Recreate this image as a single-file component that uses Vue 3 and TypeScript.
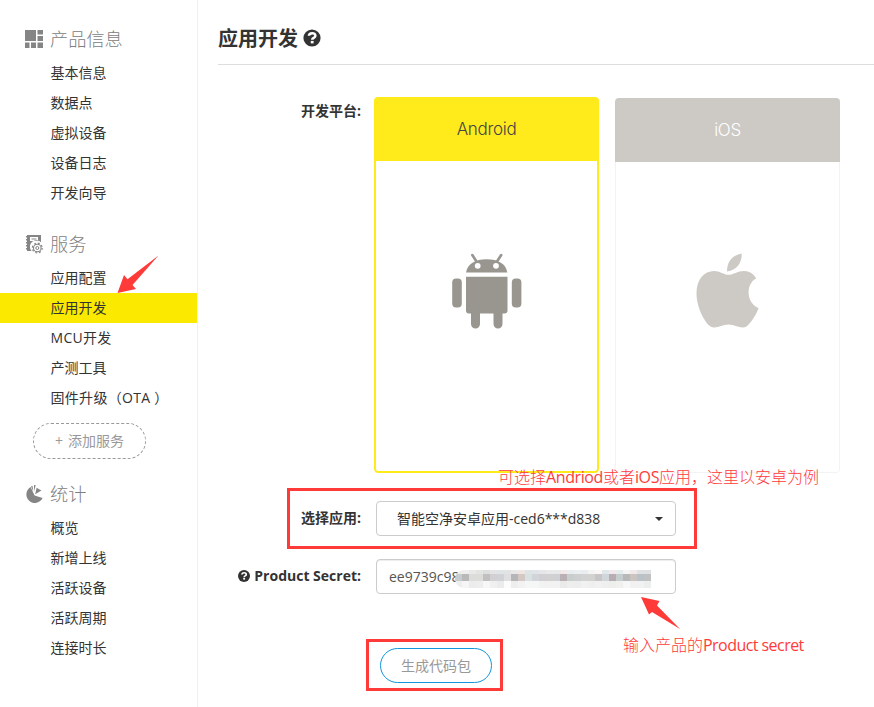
<script setup lang="ts">
import { ref } from 'vue'

interface MenuSection {
  key: string
  title: string
  items: string[]
}

const sections: MenuSection[] = [
  { key: 'product', title: '产品信息', items: ['基本信息', '数据点', '虚拟设备', '设备日志', '开发向导'] },
  { key: 'service', title: '服务', items: ['应用配置', '应用开发', 'MCU开发', '产测工具', '固件升级（OTA ）'] },
  { key: 'stats', title: '统计', items: ['概览', '新增上线', '活跃设备', '活跃周期', '连接时长'] },
]
const active = ref('应用开发')
const hasLatin = (text: string): boolean => /[A-Z]/.test(text)

const mosaic: string[][] = [
  ['#eceeee', '#eeeeee', '#e8e9e8', '#e3e5e2', '#dddfdf', '#e4e4e6', '#dfe4e6', '#e2e3e5', '#e8e8e8', '#efe6e3', '#dce4e4', '#e0e4e8', '#e6e6e8', '#e9e9eb', '#e7e8ea', '#f2e8ea', '#e8eef0', '#eceff0', '#e9edef', '#f4f4f4', '#fbf5f3', '#e0e7ea', '#f3e7ec', '#e5ecec', '#f5f5f5', '#f1e9ea', '#dfe1e2', '#dfe0e1'],
  ['#c7ccd0', '#b9b9ba', '#dcdcdb', '#dcdcdb', '#c2bfc1', '#d3d0d3', '#cfd3d7', '#dfdfe1', '#b6b5b7', '#d3c8c3', '#dae1e2', '#d1d5d9', '#d0cfd1', '#d1d1d2', '#cfd0d3', '#baafb2', '#c8cdce', '#ccd0d0', '#d2d2d2', '#d2d2d1', '#c7c5c8', '#d1d6da', '#b8adb0', '#c5cdce', '#b8b9b9', '#cbc4bf', '#b9c1c9', '#c0c1c2'],
  ['#eeeeef', '#f5f5f5', '#ececec', '#eeeeef', '#f7f7f7', '#f0f0f1', '#e9ebec', '#fcfcfc', '#eeeeef', '#f2f2f2', '#f5f6f6', '#f5f6f6', '#f2f2f2', '#f2f2f2', '#f2f2f2', '#eaeaea', '#eeeeec', '#eceeee', '#f1f1f1', '#efefee', '#f1f1f1', '#efefef', '#eeeeed', '#f0f0ee', '#f6f7f8', '#f1f1f1', '#f0f1f1', '#eceded'],
]
</script>

<template>
  <div class="page">
    <nav class="sidebar">
      <section v-for="s in sections" :key="s.key" class="section">
        <h3 class="section-title">
          <svg v-if="s.key === 'product'" width="18" height="18" viewBox="0 0 18 18" fill="#858585">
            <path d="M0 0h11v11H0zM12.5 0H18v4.5h-5.5zM12.5 6H18v5h-5.5zM0 12.5h4.5V18H0zM6 12.5h5V18H6zM12.5 12.5H18V18h-5.5z" />
          </svg>
          <svg v-else-if="s.key === 'service'" width="18" height="20" viewBox="0 0 18 20" fill="#858585">
            <path fill-rule="evenodd" d="M2 1H16V8.2A5.8 5.8 0 0 0 6.6 17H2zM5 3V7H13V3z" />
            <path d="M1 2h1v1.500H1zM1 5h1v1.500H1zM1 8h1v1.500H1zM1 11h1v1.500H1zM1 14h1v1.500H1zM6.500 4.500h5v1h-5z" />
            <circle cx="12.300" cy="14" r="3.800" fill="none" stroke="#858585" stroke-width="1.100" />
            <circle cx="12.300" cy="14" r="4.900" fill="none" stroke="#858585" stroke-width="1.200" stroke-dasharray="1.924 1.924" />
            <circle cx="12.300" cy="14" r="1.500" fill="none" stroke="#858585" stroke-width="1" />
          </svg>
          <svg v-else width="18" height="19" viewBox="0 0 18 19" fill="#858585">
            <path d="M9.600 10.500 5.600 2.100A8.500 8.500 0 1 0 17.600 13z" />
            <path d="M8.300 6.600 6 1.400l1.500-.7zM9 6.500V0l1.700.200zM10.200 9.200l1.400-6.400 4.800 2.800z" />
          </svg>
          <span>{{ s.title }}</span>
        </h3>
        <ul class="menu">
          <li v-for="item in s.items" :key="item" :class="{ active: item === active, latin: hasLatin(item) }" @click="active = item">{{ item }}</li>
        </ul>
        <button v-if="s.key === 'service'" class="add" type="button"><span class="plus">+</span>添加服务</button>
      </section>
    </nav>

    <main class="content">
      <h1 class="heading">
        <span class="heading-text">应用开发</span>
        <svg width="18" height="18" viewBox="0 0 18 18">
          <circle cx="9" cy="9" r="8.600" fill="#333" />
          <path d="M5.900 6.800C6.100 3.400 12.400 3.200 12.400 6.700c0 2.200-3.200 2.100-3.200 4" fill="none" stroke="#fff" stroke-width="2.500" />
          <path d="M7.800 11.900h2.800v2.500H7.800z" fill="#fff" />
        </svg>
      </h1>

      <div class="row platforms">
        <span class="label">开发平台:</span>
        <div class="card android">
          <div class="card-head">Android</div>
          <div class="card-body">
            <svg width="70" height="76" viewBox="0 0 70 76" fill="#999690">
              <path d="M14 19.500C15.500 11 23 6.300 34.700 6.300S54 11 55.300 19.500z" />
              <path d="M20.300 2 24.500 8.500M49.200 2 45 8.500" stroke="#999690" stroke-width="2.600" stroke-linecap="round" />
              <circle cx="25.700" cy="12.800" r="2.900" fill="#fff" />
              <circle cx="44" cy="12.800" r="2.900" fill="#fff" />
              <path d="M14 23.800h41.500V57.500a3 3 0 0 1-3 3H50.500V71a4.500 4.500 0 0 1-9 0V60.500H28V71a4.500 4.500 0 0 1-9 0V60.500H17a3 3 0 0 1-3-3z" />
              <rect x="0.200" y="25.500" width="9.600" height="29" rx="4" />
              <rect x="59.800" y="25.500" width="9.600" height="29" rx="4" />
            </svg>
          </div>
        </div>
        <div class="card ios">
          <div class="card-head">iOS</div>
          <div class="card-body">
            <svg width="64" height="76" viewBox="0 0 64 76" fill="#cdc9c4">
              <path d="M31 18.500C31 8 36.500 2.500 45.700.500 46 10 41 17 31 18.500z" />
              <path d="M32.500 21.800C38 21.800 41 18 48 18c5.500 0 10 3 12.200 7.500C55 28 52.400 34 52.600 40c.2 7 4 12.500 10 15.300C60 62 55 70 50.500 73.500c-5.500 3.200-11-2-18-2s-12.500 5.200-18 2C8.500 69.500.500 54 .500 40.500.500 26.500 8 18 18 18c6 0 9.500 3.800 14.500 3.800z" />
            </svg>
          </div>
        </div>
      </div>

      <div class="row select-row">
        <span class="label">选择应用:</span>
        <div class="field select">
          <span>智能空净安卓应用-ced6***d838</span>
          <i class="caret"></i>
        </div>
      </div>

      <div class="row secret-row">
        <span class="label">
          <svg width="12" height="12" viewBox="0 0 18 18">
            <circle cx="9" cy="9" r="9" fill="#333" />
            <path d="M5.900 6.800C6.100 3.400 12.400 3.200 12.400 6.700c0 2.200-3.200 2.100-3.200 4" fill="none" stroke="#fff" stroke-width="2.500" />
            <path d="M7.800 11.900h2.800v2.500H7.800z" fill="#fff" />
          </svg>
          Product Secret:
        </span>
        <div class="field input">
          <span>ee9739c98</span>
          <div class="mosaic">
            <div v-for="(line, r) in mosaic" :key="r" class="mosaic-line">
              <i v-for="(c, n) in line" :key="n" :style="{ background: c }"></i>
            </div>
          </div>
        </div>
      </div>

      <button class="generate" type="button">生成代码包</button>
    </main>

    <div class="frame frame-select"></div>
    <div class="frame frame-generate"></div>
    <p class="note note-app">可选择<span class="latin">Andriod</span>或者<span class="latin">iOS</span>应用，这里以安卓为例</p>
    <p class="note note-secret">输入产品的<span class="latin">Product secret</span></p>
    <svg class="arrow arrow-menu" width="44" height="42" viewBox="0 0 44 42"><path fill="#ff3b39" d="M.500 39 7 21l3.500 4.300L41.500 1.500 15.500 31l3.500 4z" /></svg>
    <svg class="arrow arrow-secret" width="42" height="36" viewBox="0 0 42 36"><path fill="#ff3b39" d="M1 1 19.500 5 17 9.500 40 33 12 16 9 18.500z" /></svg>
  </div>
</template>

<style>
body {
  margin: 0;
  background: #fff;
  overflow: hidden;
}
</style>

<style scoped>
.page {
  position: relative;
  display: flex;
  width: 874px;
  height: 707px;
  overflow: hidden;
  box-sizing: border-box;
  font-family: "Open Sans", "Noto Sans CJK SC", sans-serif;
  font-size: 14px;
  color: #333;
  white-space: nowrap;
}
.sidebar {
  width: 197px;
  flex: none;
  padding-top: 20px;
  border-right: 1px solid #f0f0f0;
}
.section {
  margin-bottom: 17px;
}
.section:nth-child(2) {
  margin-bottom: 16px;
}
.section-title {
  display: flex;
  align-items: center;
  gap: 7px;
  height: 38px;
  margin: 0;
  padding-left: 25px;
  font-size: 18.2px;
  line-height: 40px;
  font-weight: 300;
  color: #808080;
}
.menu {
  list-style: none;
  margin: 0;
  padding: 0;
}
.menu li {
  height: 30px;
  line-height: 30px;
  padding-left: 50.5px;
  cursor: pointer;
}
.menu li.latin {
  letter-spacing: 0.3px;
}
.menu li.active {
  background: #fbea00;
}
button {
  font-family: inherit;
  font-size: 14px;
  padding: 0;
  background: #fff;
  color: #999;
  box-sizing: border-box;
  cursor: pointer;
}
.add {
  display: block;
  width: 113px;
  height: 36px;
  margin: 10px 0 0 33px;
  border: 1px dashed #999;
  border-radius: 18px;
  line-height: 34px;
}
.plus {
  margin-right: 5px;
}
.content {
  flex: 1;
  min-width: 0;
  padding-left: 20px;
}
.heading {
  display: flex;
  align-items: center;
  gap: 5px;
  height: 52px;
  margin: 0;
  padding-top: 12px;
  border-bottom: 1px solid #ddd;
  font-size: 20px;
  line-height: 52px;
  font-weight: 700;
}
.heading-text {
  padding-top: 2px;
}
.row {
  display: flex;
}
.label {
  display: flex;
  align-items: center;
  justify-content: flex-end;
  gap: 4px;
  flex: none;
  width: 143px;
  height: 34px;
  margin-right: 1px;
  font-weight: 700;
  line-height: 34px;
}
.platforms {
  height: 376px;
  margin-top: 32px;
}
.platforms .label {
  height: 28px;
  line-height: 28px;
}
.card {
  display: flex;
  flex-direction: column;
  flex: none;
  width: 225px;
  box-sizing: border-box;
  border-radius: 4px;
  overflow: hidden;
}
.card-head {
  display: flex;
  align-items: center;
  justify-content: center;
  flex: none;
  height: 64px;
  font-family: Inter, "Liberation Sans", sans-serif;
  font-size: 17px;
  font-weight: 300;
  letter-spacing: -0.3px;
}
.card-body {
  flex: 1;
  display: flex;
  justify-content: center;
  box-sizing: border-box;
  padding-top: 92px;
  border-radius: 0 0 4px 4px;
}
.android {
  margin-left: 12px;
}
.android .card-head {
  background: #ffea1c;
  color: #444;
}
.android .card-body {
  border: solid #ffea1c;
  border-width: 0 2px 2px;
}
.ios {
  margin: 1px 0 0 16px;
}
.ios .card-head {
  background: #cdc9c4;
  color: #fff;
}
.ios .card-body {
  padding-top: 91px;
  border: solid #f3f3f3;
  border-width: 0 1px 1px;
}
.select-row {
  margin-top: 28px;
}
.secret-row {
  margin-top: 23px;
}
.field {
  position: relative;
  display: flex;
  align-items: center;
  width: 300px;
  height: 35px;
  margin-left: 14px;
  box-sizing: border-box;
  border: 1px solid #ccc;
  border-radius: 4px;
  line-height: 33px;
}
.select {
  justify-content: space-between;
  padding: 0 12px 0 20px;
}
.caret {
  border: solid transparent;
  border-width: 4px 4px 0;
  border-top-color: #333;
}
.input {
  padding-left: 12px;
  color: #555;
  box-shadow: inset 0 1px 1px rgba(0, 0, 0, 0.075);
}
.mosaic {
  position: absolute;
  left: 78px;
  top: 10px;
  border-radius: 9px 0 0 9px;
  overflow: hidden;
}
.mosaic-line {
  display: flex;
}
.mosaic-line i {
  width: 7px;
  height: 7px;
}
.mosaic-line:first-child i {
  height: 4px;
}
.generate {
  display: block;
  width: 112px;
  height: 35px;
  margin: 54px 0 0 162px;
  border: 1px solid #1295db;
  border-radius: 18px;
  line-height: 33px;
}
.frame {
  position: absolute;
  box-sizing: border-box;
  border: 3px solid #ff3b39;
  pointer-events: none;
}
.frame-select {
  left: 287px;
  top: 488px;
  width: 410px;
  height: 61px;
}
.frame-generate {
  left: 366px;
  top: 639px;
  width: 137px;
  height: 52px;
}
.note {
  position: absolute;
  margin: 0;
  font-size: 16px;
  line-height: 24px;
  font-weight: 300;
  color: #ff3b39;
}
.note .latin {
  font-weight: 400;
  letter-spacing: -0.4px;
}
.note-app {
  left: 498px;
  top: 465px;
}
.note-secret {
  left: 623px;
  top: 633px;
}
.note-secret .latin {
  letter-spacing: -0.55px;
}
.arrow {
  position: absolute;
}
.arrow-menu {
  left: 117px;
  top: 254px;
}
.arrow-secret {
  left: 640px;
  top: 596px;
}
</style>
